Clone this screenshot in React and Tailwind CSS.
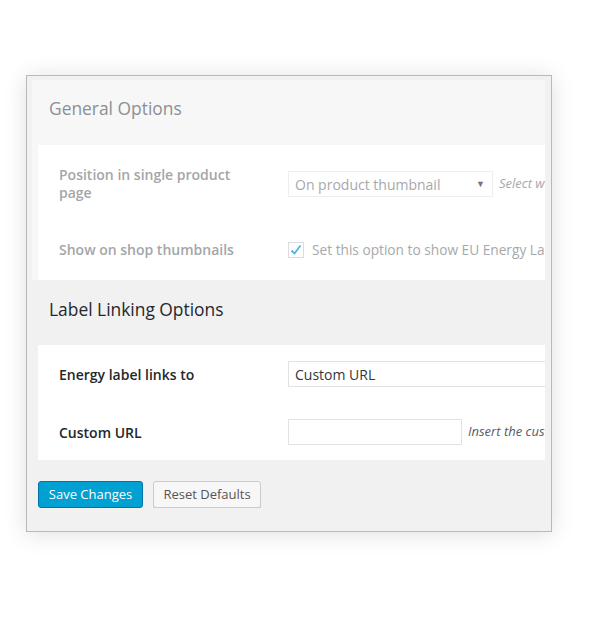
export default function App() {
  return (
    <div className="w-[600px] h-[623px] bg-white pt-[75px] pl-[26px]" style={{ fontFamily: '"Open Sans", "Liberation Sans", sans-serif' }}>
      <div className="w-[526px] h-[457px] border border-[#b9b9b9] bg-[#f1f1f1] shadow-[0_2px_22px_rgba(0,0,0,0.13)] overflow-hidden">
        {/* faded general options block */}
        <div className="ml-[5px] mt-[4px] w-[513px] bg-[#f7f7f7] overflow-hidden">
          <div className="h-[65px] pt-[16px] pl-[17px] text-[17.4px] leading-[24px] text-[#8a9096]">General Options</div>
          <div className="ml-[6px] w-[520px] h-[135px] bg-white pl-[21px] pt-[21px]">
            <div className="flex items-center">
              <div className="w-[229px] shrink-0 text-[14px] leading-[18px] font-semibold text-[#a3a6a9]">
                Position in single product<br />page
              </div>
              <div className="w-[205px] h-[26px] shrink-0 border border-[#eeeeee] flex items-center justify-between pl-[6px] pr-[7px] text-[14px] text-[#a6a9ac]">
                <span>On product thumbnail</span>
                <span className="text-[9px] text-[#777]">▼</span>
              </div>
              <span className="ml-[6px] text-[13px] italic text-[#a6a9ac] whitespace-nowrap">Select where</span>
            </div>
            <div className="flex items-center mt-[38px]">
              <div className="w-[229px] shrink-0 text-[14px] leading-[18px] font-semibold text-[#a3a6a9]">Show on shop thumbnails</div>
              <div className="w-[16px] h-[16px] shrink-0 border border-[#dcdcdc] flex items-center justify-center">
                <svg width="12" height="12" viewBox="0 0 12 12">
                  <path d="M1.5 6.5 L4.5 9.5 L10.5 1.5" fill="none" stroke="#4fb3e0" strokeWidth="1.8" />
                </svg>
              </div>
              <span className="ml-[8px] text-[13.7px] text-[#a6a9ac] whitespace-nowrap">Set this option to show EU Energy Label</span>
            </div>
          </div>
        </div>

        {/* label linking options */}
        <div className="ml-[11px] w-[507px] overflow-hidden">
          <div className="h-[65px] pt-[17px] pl-[11px] text-[17.4px] leading-[24px] text-[#23282d]">Label Linking Options</div>
          <div className="w-[600px] h-[115px] bg-white pl-[21px] pt-[16px]">
            <div className="flex items-center h-[26px]">
              <div className="w-[229px] shrink-0 text-[14px] font-semibold text-[#23282d]">Energy label links to</div>
              <div className="w-[300px] h-[26px] shrink-0 border border-[#e2e2e2] flex items-center pl-[6px] text-[14px] text-[#32373c]">Custom URL</div>
            </div>
            <div className="flex items-center h-[26px] mt-[32px]">
              <div className="w-[229px] shrink-0 text-[14px] font-semibold text-[#23282d]">Custom URL</div>
              <div className="w-[174px] h-[26px] shrink-0 border border-[#e2e2e2] bg-white"></div>
              <span className="ml-[6px] text-[13px] italic text-[#555d66] whitespace-nowrap">Insert the custom URL</span>
            </div>
          </div>
          <div className="flex gap-[10px] mt-[21px]">
            <button className="w-[105px] h-[27px] rounded-[3px] border border-[#0073aa] bg-[#00a0d2] text-white text-[13px] leading-none">Save Changes</button>
            <button className="w-[108px] h-[27px] rounded-[3px] border border-[#cccccc] bg-[#f7f7f7] text-[#555] text-[13px] leading-none shadow-[0_1px_0_#ccc]">Reset Defaults</button>
          </div>
        </div>
      </div>
    </div>
  );
}
